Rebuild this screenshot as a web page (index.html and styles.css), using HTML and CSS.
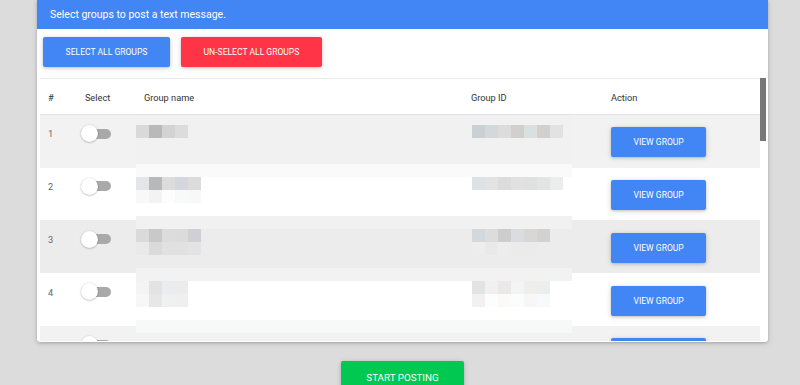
FILE: index.html
```html
<!DOCTYPE html>
<html lang="en">
<head>
    <meta charset="UTF-8">
    <meta name="viewport" content="width=device-width, initial-scale=1.0">
    <title>Post to groups</title>
    <link rel="stylesheet" href="styles.css">
</head>
<body>

    <div class="panel">
        <div class="panel-head">Select groups to post a text message.</div>

        <div class="toolbar">
            <button class="btn btn-blue" type="button">Select all groups</button>
            <button class="btn btn-red" type="button">Un-select all groups</button>
        </div>

        <div class="table-box">
            <div class="table-wrap">
                <table class="groups">
                    <colgroup>
                        <col class="col-num">
                        <col class="col-select">
                        <col class="col-name">
                        <col class="col-id">
                        <col>
                    </colgroup>
                    <thead>
                        <tr>
                            <th>#</th>
                            <th>Select</th>
                            <th>Group name</th>
                            <th>Group ID</th>
                            <th>Action</th>
                        </tr>
                    </thead>
                    <tbody>
                        <tr><td>1</td><td><label class="switch"><input type="checkbox"><span class="lever"></span></label></td><td>Hidden group</td><td>1627384950617283</td><td><a class="btn btn-blue btn-view">View group</a></td></tr>
                        <tr><td>2</td><td><label class="switch"><input type="checkbox"><span class="lever"></span></label></td><td>Hidden group</td><td>1029384756102938</td><td><a class="btn btn-blue btn-view">View group</a></td></tr>
                        <tr class="is-hover"><td>3</td><td><label class="switch"><input type="checkbox"><span class="lever"></span></label></td><td>Hidden group</td><td>564738291056473</td><td><a class="btn btn-blue btn-view">View group</a></td></tr>
                        <tr><td>4</td><td><label class="switch"><input type="checkbox"><span class="lever"></span></label></td><td>Hidden group</td><td>918273645091827</td><td><a class="btn btn-blue btn-view">View group</a></td></tr>
                        <tr><td>5</td><td><label class="switch"><input type="checkbox"><span class="lever"></span></label></td><td>Buy and Sell Hub</td><td>1472583690147258</td><td><a class="btn btn-blue btn-view">View group</a></td></tr>
                    </tbody>
                </table>

                <!-- pixelated cover over names and ids -->
                <div class="mosaic">
                    <div class="blot name-1"></div>
                    <div class="blot name-2"></div>
                    <div class="blot name-3"></div>
                    <div class="blot name-4"></div>
                    <div class="blot id-1"></div>
                    <div class="blot id-2"></div>
                    <div class="blot id-3"></div>
                    <div class="blot id-4"></div>
                </div>
            </div>
            <div class="scroll-thumb"></div>
        </div>
    </div>

    <div class="footer">
        <button class="btn btn-green" type="button">Start posting</button>
    </div>

</body>
</html>
```

FILE: styles.css
```css
* {
    margin: 0;
    padding: 0;
    box-sizing: border-box;
}

body {
    font-family: Roboto, 'Liberation Sans', sans-serif;
    background: #dcdcdc;
    overflow: hidden;
}

.panel {
    width: 731px;
    margin-left: 37px;
    padding: 0 0 1px 3px;
    background-color: #fff;
    border-radius: 0 0 3px 3px;
    box-shadow: 0 1px 3px rgba(0, 0, 0, 0.2), 0 1px 7px rgba(0, 0, 0, 0.1);
}

.panel-head {
    height: 29px;
    margin-left: -3px;
    padding-left: 13px;
    background-color: #4285f4;
    color: #fff;
    font-size: 10.5px;
    line-height: 29px;
}

.toolbar {
    display: flex;
    gap: 11px;
    padding: 8px 0 11px 3px;
}

.btn {
    display: inline-block;
    height: 30px;
    padding: 0 22.6px;
    border: none;
    border-radius: 2px;
    color: #fff;
    font-family: inherit;
    font-size: 8.55px;
    line-height: 30px;
    text-transform: uppercase;
    white-space: nowrap;
    cursor: pointer;
    box-shadow: 0 1px 3px rgba(0, 0, 0, 0.16), 0 1px 6px rgba(0, 0, 0, 0.12);
}

.btn-blue {
    background-color: #4285f4;
}

.btn-red {
    background-color: #ff3547;
}

.btn-green {
    height: 34px;
    padding: 0 25.3px;
    background-color: #00c851;
    font-size: 9.8px;
    line-height: 34px;
}

.btn-view {
    display: block;
    width: max-content;
}

/* table */

.table-box {
    position: relative;
}

.table-wrap {
    position: relative;
    height: 263px;
    overflow: hidden;
}

.scroll-thumb {
    position: absolute;
    top: 0;
    right: 2.5px;
    width: 5.5px;
    height: 63px;
    background-color: #777;
}

.groups {
    width: 720px;
    border-collapse: collapse;
    table-layout: fixed;
    font-size: 9.24px;
    line-height: 1.5;
}

.col-num {
    width: 37px;
}

.col-select {
    width: 59px;
}

.col-name {
    width: 327px;
}

.col-id {
    width: 140px;
}

.groups th {
    padding: 11.5px 7.9px 9.6px;
    border-top: 1px solid #e9ebee;
    border-bottom: 1px solid #dfe3e8;
    text-align: left;
    font-weight: 400;
    color: #333;
}

.groups td {
    padding: 12.5px 7.9px 10.25px;
    vertical-align: top;
    color: #666;
    white-space: nowrap;
}

.groups tbody tr:nth-child(odd) {
    background-color: #f2f2f2;
}

.groups tbody tr.is-hover {
    background-color: #ececec;
}

/* toggle */

.switch {
    display: block;
    position: relative;
    width: 25.7px;
    height: 10px;
    margin-top: 1.2px;
}

.switch input {
    display: none;
}

.lever {
    display: block;
    width: 100%;
    height: 100%;
    border-radius: 5px;
    background-color: #a9a9a9;
}

.lever::after {
    content: '';
    position: absolute;
    left: -4px;
    top: -3.5px;
    width: 17px;
    height: 17px;
    border-radius: 50%;
    background-color: #fff;
    box-shadow: 0 0.5px 2px rgba(0, 0, 0, 0.35);
}

/* pixelated cover */

.mosaic {
    position: absolute;
    left: 96px;
    top: 37px;
    width: 436px;
    height: 218px;
    background: linear-gradient(180deg,
        #f1f1f1 0 49px,
        #fafafa 49px 62px,
        #fff 62px 101px,
        #f1f1f1 101px 114px,
        #ececec 114px 153px,
        #f2f2f2 153px 166px,
        #fff 166px 205px,
        #f7f8f8 205px 218px);
}

.blot {
    position: absolute;
    background-repeat: no-repeat;
}

.name-1 {
    left: 0;
    top: 10px;
    width: 52px;
    height: 13px;
    background-image: linear-gradient(90deg, #d9d9d9 0 13px, #b9b9bb 13px 26px, #d3d3d3 26px 39px, #dcdcdc 39px 52px);
}

.name-2 {
    left: 0;
    top: 62px;
    width: 65px;
    height: 26px;
    background-image:
        linear-gradient(90deg, #e4e5e7 0 13px, #b9b9b9 13px 26px, #dcdcdc 26px 39px, #d5d7de 39px 52px, #dcdcdc 52px 65px),
        linear-gradient(90deg, #f8f8f8 0 13px, #f3f3f3 13px 26px, #fdfdfd 26px 39px, #f8f9f9 39px 52px, #f7f8fa 52px 65px);
    background-size: 100% 13px;
    background-position: 0 0, 0 13px;
}

.name-3 {
    left: 0;
    top: 114px;
    width: 65px;
    height: 26px;
    background-image:
        linear-gradient(90deg, #dadada 0 13px, #c9c9c9 13px 26px, #dcdcdc 26px 39px, #dbdbdb 39px 52px, #cfcfd5 52px 65px),
        linear-gradient(90deg, #e9e9e9 0 13px, #dadada 13px 26px, #e1e1e1 26px 39px, #e1e1e1 39px 52px, #e3e3e6 52px 65px);
    background-size: 100% 13px;
    background-position: 0 0, 0 13px;
}

.name-4 {
    left: 0;
    top: 166px;
    width: 52px;
    height: 26px;
    background-image:
        linear-gradient(90deg, #f4f4f4 0 13px, #e3e3e3 13px 26px, #ebecef 26px 39px, #ececec 39px 52px),
        linear-gradient(90deg, #f6f7f7 0 13px, #e8e7e6 13px 26px, #f0f0f1 26px 39px, #efefef 39px 52px);
    background-size: 100% 13px;
    background-position: 0 0, 0 13px;
}

.id-1 {
    left: 336px;
    top: 10px;
    width: 91px;
    height: 13px;
    background-image: linear-gradient(90deg, #c9d1d4 0 13px, #d5d8da 13px 26px, #dcdcdc 26px 39px, #d1d0cd 39px 52px, #dadfe0 52px 65px, #d3cfcd 65px 78px, #e2e2e2 78px 91px);
}

.id-2 {
    left: 336px;
    top: 62px;
    width: 91px;
    height: 13px;
    background-image: linear-gradient(90deg, #dde2e5 0 13px, #e3e3e3 13px 26px, #dcdcdd 26px 39px, #e1e1e1 39px 52px, #e0e0e0 52px 65px, #e3e4e4 65px 78px, #ececec 78px 91px);
}

.id-3 {
    left: 336px;
    top: 114px;
    width: 78px;
    height: 26px;
    background-image:
        linear-gradient(90deg, #d3d8dc 0 13px, #dcdcdc 13px 26px, #cdcdcd 26px 39px, #d9dde1 39px 52px, #d8d7d5 52px 65px, #d3d2d0 65px 78px),
        linear-gradient(90deg, #ededed 0 13px, #e9e9e9 13px 26px, #ededed 26px 39px, #ebebeb 39px 52px, #ebebeb 52px 65px, #ececec 65px 78px);
    background-size: 100% 13px;
    background-position: 0 0, 0 13px;
}

.id-4 {
    left: 336px;
    top: 166px;
    width: 78px;
    height: 26px;
    background-image:
        linear-gradient(90deg, #e1e4e7 0 13px, #f1eff0 13px 26px, #eae8e9 26px 39px, #f2f4f5 39px 52px, #f0eeed 52px 65px, #eceeee 65px 78px),
        linear-gradient(90deg, #f1f1f1 0 13px, #fcfdfd 13px 26px, #fbfaf9 26px 39px, #fbfcfc 39px 52px, #f7f7f7 52px 65px, #f8f9fa 65px 78px);
    background-size: 100% 13px;
    background-position: 0 0, 0 13px;
}

.footer {
    width: 731px;
    margin-left: 37px;
    padding-top: 19px;
    text-align: center;
}
```
